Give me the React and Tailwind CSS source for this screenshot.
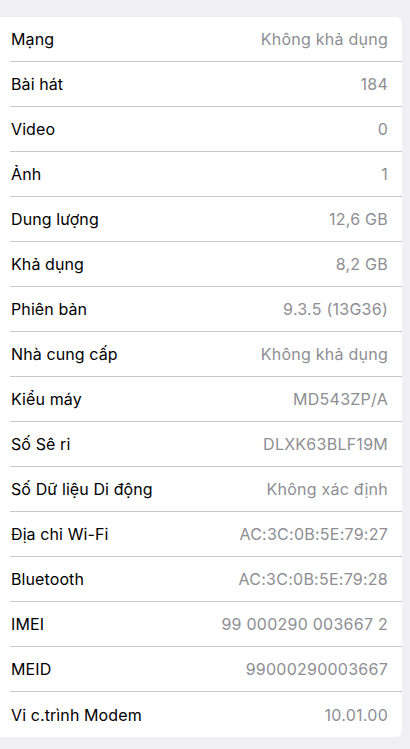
import React from 'react';

const rows = [
  ['Mạng', 'Không khả dụng'],
  ['Bài hát', '184'],
  ['Video', '0'],
  ['Ảnh', '1'],
  ['Dung lượng', '12,6 GB'],
  ['Khả dụng', '8,2 GB'],
  ['Phiên bản', '9.3.5 (13G36)'],
  ['Nhà cung cấp', 'Không khả dụng'],
  ['Kiểu máy', 'MD543ZP/A'],
  ['Số Sê ri', 'DLXK63BLF19M'],
  ['Số Dữ liệu Di động', 'Không xác định'],
  ['Địa chỉ Wi-Fi', 'AC:3C:0B:5E:79:27'],
  ['Bluetooth', 'AC:3C:0B:5E:79:28'],
  ['IMEI', '99 000290 003667 2'],
  ['MEID', '99000290003667'],
  ['Vi c.trình Modem', '10.01.00'],
];

export default function App() {
  return (
    <div className="min-h-[749px] bg-[#efeff4] pt-[17px] pr-[8px]" style={{ fontFamily: 'Inter, "Noto Sans", sans-serif' }}>
      <div className="bg-white rounded-r-[6px] overflow-hidden">
        {rows.map(([label, value], i) => (
          <div key={label} className="pl-[10px]">
            <div
              className={`h-[45px] flex items-center justify-between pr-[14px] ${i < rows.length - 1 ? 'border-b border-[#c8c7cc]' : ''}`}
            >
              <span className="pl-[1px] text-[16px] tracking-[0.1px] text-black">{label}</span>
              <span className="text-[16px] tracking-[0.25px] text-[#8e8e93]">{value}</span>
            </div>
          </div>
        ))}
      </div>
    </div>
  );
}
